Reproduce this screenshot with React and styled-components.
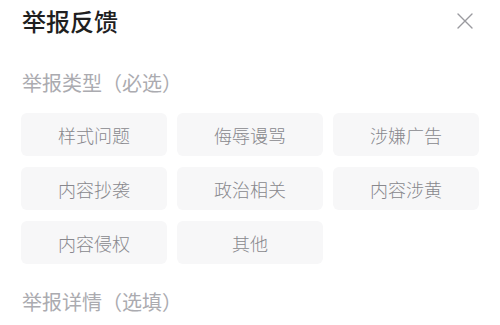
import React, { useState } from "react";
import styled, { createGlobalStyle } from "styled-components";

const GlobalStyle = createGlobalStyle`
  html, body {
    margin: 0;
    padding: 0;
    background: #ffffff;
  }
  body {
    font-family: "Noto Sans CJK SC", "Noto Sans", sans-serif;
  }
`;

const Panel = styled.div`
  width: 500px;
  height: 325px;
  box-sizing: border-box;
  padding: 4px 21px 0 21px;
  overflow: hidden;
  display: flex;
  flex-direction: column;
`;

const Header = styled.div`
  display: flex;
  align-items: center;
  justify-content: space-between;
  height: 34px;
`;

const Title = styled.h2`
  margin: 0;
  font-size: 24px;
  line-height: 34px;
  font-weight: 500;
  color: #1f1f1f;
  padding-left: 1px;
`;

const CloseButton = styled.button`
  border: none;
  background: none;
  padding: 0;
  margin-right: 5px;
  width: 18px;
  height: 18px;
  display: flex;
  align-items: center;
  justify-content: center;
  cursor: pointer;
`;

const SectionLabel = styled.div`
  font-size: 20px;
  line-height: 28px;
  color: #ababb0;
  padding-left: 1px;
  margin-top: ${(p) => p.$top}px;
`;

const Grid = styled.div`
  display: grid;
  grid-template-columns: repeat(3, 146px);
  column-gap: 10px;
  row-gap: 11px;
  margin-top: 16px;
`;

const Option = styled.button`
  height: 43px;
  border: none;
  border-radius: 6px;
  background: ${(p) => (p.$active ? "#fff1f0" : "#f7f7f8")};
  color: ${(p) => (p.$active ? "#fe2c55" : "#88888d")};
  font-family: inherit;
  font-size: 18px;
  font-weight: 300;
  padding: 0;
  cursor: pointer;
`;

const types = [
  "样式问题",
  "侮辱谩骂",
  "涉嫌广告",
  "内容抄袭",
  "政治相关",
  "内容涉黄",
  "内容侵权",
  "其他",
];

export default function App() {
  const [selected, setSelected] = useState(null);

  return (
    <>
      <GlobalStyle />
      <Panel>
        <Header>
          <Title>举报反馈</Title>
          <CloseButton aria-label="关闭">
            <svg width="16" height="16" viewBox="0 0 16 16">
              <path
                d="M1 1 L15 15 M15 1 L1 15"
                stroke="#9a9a9f"
                strokeWidth="1.4"
                strokeLinecap="round"
              />
            </svg>
          </CloseButton>
        </Header>
        <SectionLabel $top={31}>举报类型（必选）</SectionLabel>
        <Grid>
          {types.map((t) => (
            <Option
              key={t}
              $active={selected === t}
              onClick={() => setSelected(t)}
            >
              {t}
            </Option>
          ))}
        </Grid>
        <SectionLabel $top={24}>举报详情（选填）</SectionLabel>
      </Panel>
    </>
  );
}
